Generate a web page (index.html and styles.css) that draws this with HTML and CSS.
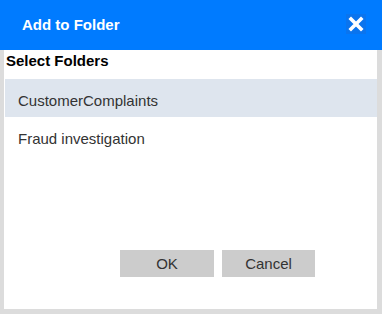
FILE: index.html
```html
<!DOCTYPE html>
<html>
<head>
<meta charset="utf-8">
<link rel="stylesheet" href="styles.css">
</head>
<body>
<div class="dialog">
  <div class="header">
    <span class="title">Add to Folder</span>
    <span class="close">
      <svg width="20" height="20" viewBox="0 0 20 20"><path d="M5 5 L15 15 M15 5 L5 15" stroke="#fff" stroke-width="3.6" stroke-linecap="square" fill="none"/></svg>
    </span>
  </div>
  <div class="body">
    <div class="heading">Select Folders</div>
    <ul class="list">
      <li class="item selected">CustomerComplaints</li>
      <li class="item">Fraud investigation</li>
    </ul>
    <div class="footer">
      <button class="btn">OK</button>
      <button class="btn">Cancel</button>
    </div>
  </div>
</div>
</body>
</html>
```
FILE: styles.css
```css
html, body {
  margin: 0;
  padding: 0;
}
body {
  width: 382px;
  height: 314px;
  font-family: "Liberation Sans", Arial, sans-serif;
  font-size: 15px;
  background: #dcdcdc;
}
.dialog {
  display: flex;
  flex-direction: column;
  width: 382px;
  height: 314px;
}
.header {
  height: 50px;
  background: #007bff;
  display: flex;
  align-items: center;
  justify-content: space-between;
  padding: 0 16px 0 22px;
  color: #fff;
}
.title {
  font-weight: bold;
  line-height: 50px;
}
.close {
  width: 20px;
  height: 20px;
  background: #0a74ee;
  display: flex;
  margin-top: -2px;
}
.body {
  flex: 1;
  display: flex;
  flex-direction: column;
  background: #fff;
  margin: 0 5px 5px 4px;
}
.heading {
  font-weight: bold;
  color: #000;
  line-height: 18px;
  padding: 2px 0 0 2px;
  margin-bottom: 9px;
}
.list {
  list-style: none;
  margin: 0 0 0 1px;
  padding: 0;
}
.item {
  height: 38px;
  box-sizing: border-box;
  padding: 6px 0 0 13px;
  line-height: 32px;
  color: #333;
}
.item.selected {
  background: #dee5ee;
}
.footer {
  margin-top: auto;
  display: flex;
  gap: 8px;
  padding: 0 0 32px 116px;
}
.btn {
  height: 27px;
  border: none;
  background: #cccccc;
  color: #333;
  font-family: "Liberation Sans", Arial, sans-serif;
  font-size: 15px;
  line-height: 27px;
  padding: 0;
  width: 94px;
}
.btn + .btn {
  width: 93px;
}
```
